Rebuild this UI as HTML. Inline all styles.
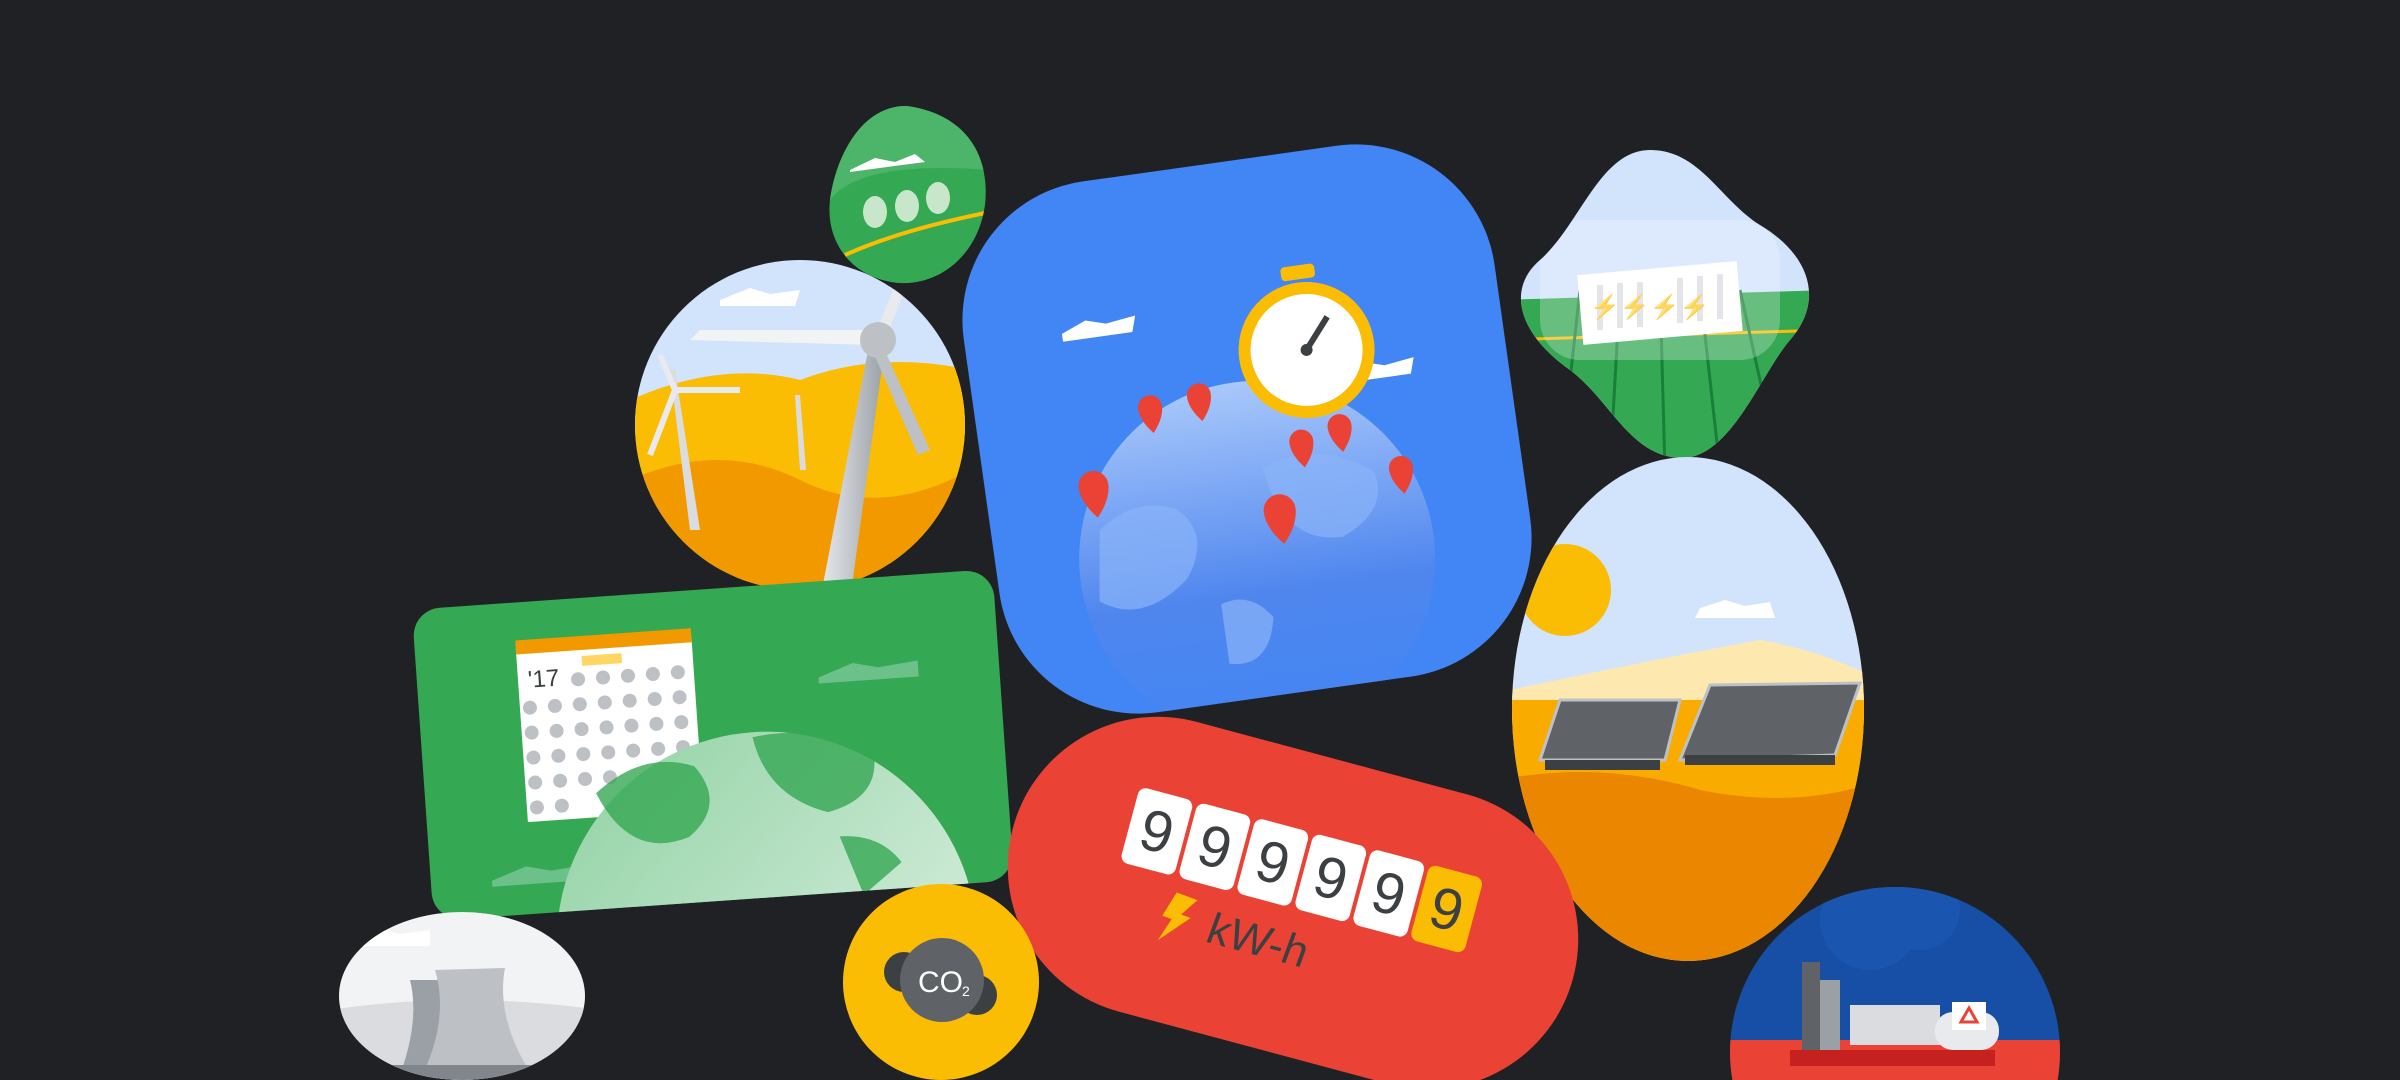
<!DOCTYPE html>
<html><head><meta charset="utf-8"><style>
html,body{margin:0;padding:0;background:#202124;width:2400px;height:1080px;overflow:hidden}
svg{display:block;position:absolute;left:0;top:0;overflow:hidden}
text{font-family:"Liberation Sans",sans-serif}
</style></head><body>
<svg width="2400" height="1080" viewBox="0 0 2400 1080" xmlns="http://www.w3.org/2000/svg">
<defs>
<clipPath id="cWind"><circle cx="800" cy="425" r="165"/></clipPath>
<clipPath id="cSmall"><path d="M907 106 C970 115 990 160 985 205 C978 255 940 285 900 283 C855 280 825 245 830 200 C835 160 860 105 907 106Z"/></clipPath>
<clipPath id="cBatt"><path d="M1650 150 C1700 150 1720 200 1760 225 C1810 255 1825 300 1790 340 C1760 375 1730 460 1680 458 C1630 456 1610 400 1570 370 C1520 335 1505 290 1540 260 C1580 225 1600 150 1650 150Z"/></clipPath>
<clipPath id="cSolar"><ellipse cx="1688" cy="709" rx="176" ry="252"/></clipPath>
<clipPath id="cTower"><ellipse cx="462" cy="996" rx="123" ry="84"/></clipPath>
<clipPath id="cFact"><circle cx="1895" cy="1052" r="165"/></clipPath>
<clipPath id="cBlue"><rect x="-268" y="-268" width="536" height="536" rx="140"/></clipPath>
<clipPath id="cGreen"><rect x="-291" y="-156" width="582" height="312" rx="28"/></clipPath>
<linearGradient id="gGlobe" x1="0" y1="0" x2="0" y2="1"><stop offset="0" stop-color="#a9c8fb"/><stop offset="0.6" stop-color="#4f86ee"/><stop offset="1" stop-color="#4285f4"/></linearGradient>
<linearGradient id="gGreenGlobe" x1="0" y1="0" x2="1" y2="1"><stop offset="0" stop-color="#8fd1a2"/><stop offset="1" stop-color="#e6f4ea"/></linearGradient>
<linearGradient id="gPole" x1="0" y1="0" x2="1" y2="0"><stop offset="0" stop-color="#e8eaed"/><stop offset="1" stop-color="#9aa0a6"/></linearGradient>
</defs>

<g clip-path="url(#cSmall)">
<rect x="820" y="100" width="180" height="190" fill="#34a853"/>
<path d="M830 200 Q860 160 990 170 L990 100 L820 100Z" fill="#4cb56a"/>
<path d="M850 170 l25 -12 l20 4 l20 -8 l10 8 -75 10z" fill="#fff"/>
<ellipse cx="875" cy="212" rx="12" ry="16" fill="#c8e6c9"/><ellipse cx="907" cy="206" rx="12" ry="16" fill="#c8e6c9"/><ellipse cx="938" cy="198" rx="12" ry="16" fill="#c8e6c9"/>
<path d="M845 255 Q900 230 990 212" stroke="#fbbc04" stroke-width="4" fill="none"/>
</g>

<g clip-path="url(#cWind)">
<rect x="630" y="255" width="340" height="340" fill="#d2e3fc"/>
<path d="M630 400 Q720 360 800 380 Q880 350 970 370 L970 600 L630 600Z" fill="#fbbc04"/>
<path d="M630 480 Q720 440 800 480 Q880 520 970 470 L970 600 L630 600Z" fill="#f29900"/>
<path d="M720 300 l30 -12 l20 6 l30 -4 l-5 16 -75 0z" fill="#fff"/>
<path d="M690 530 L670 370 L675 370 L700 530Z" fill="#dadce0"/>
<path d="M800 470 L795 395 L800 395 L806 470Z" fill="#dadce0"/>
<path d="M820 600 L870 340 L885 345 L850 600Z" fill="url(#gPole)"/>
<path d="M875 345 L690 340 L700 330 L875 330Z" fill="#f1f3f4"/>
<path d="M880 340 L930 450 L918 455 L870 345Z" fill="#bdc1c6"/>
<path d="M875 335 L905 260 L915 265 L885 340Z" fill="#e8eaed"/>
<circle cx="878" cy="340" r="18" fill="#bdc1c6"/>
<path d="M675 390 L650 455 M675 390 L740 390 M675 390 L660 355" stroke="#e8eaed" stroke-width="6"/>
</g>

<g clip-path="url(#cBatt)">
<rect x="1500" y="140" width="330" height="330" fill="#d2e3fc"/>
<path d="M1500 300 L1830 290 L1830 470 L1500 470Z" fill="#34a853"/>
<path d="M1500 340 L1830 330" stroke="#fbbc04" stroke-width="3"/>
<path d="M1580 290 L1560 470 M1620 290 L1610 470 M1660 290 L1665 470 M1700 290 L1720 470 M1740 290 L1780 470" stroke="#188038" stroke-width="3"/>
<rect x="1580" y="268" width="160" height="70" fill="#fff" transform="rotate(-5 1660 303)"/>
<path d="M1600 285 v45 M1620 283 v45 M1640 282 v45 M1680 278 v45 M1700 276 v45 M1720 274 v45" stroke="#dadce0" stroke-width="6"/>
<text x="1590" y="315" fill="#fbbc04" font-size="24">⚡⚡⚡⚡</text>
<rect x="1540" y="220" width="240" height="140" rx="40" fill="#fff" opacity="0.25"/>
</g>

<g clip-path="url(#cSolar)">
<rect x="1500" y="450" width="380" height="520" fill="#d2e3fc"/>
<circle cx="1565" cy="590" r="46" fill="#fbbc04"/>
<path d="M1700 608 l25 -8 l20 6 l25 -4 l5 16 -80 0z" fill="#fff"/>
<path d="M1510 690 Q1650 660 1760 640 Q1820 650 1880 680 L1880 720 L1510 720Z" fill="#fde9b0"/>
<rect x="1500" y="700" width="380" height="270" fill="#f9ab00"/>
<path d="M1500 780 Q1600 760 1700 790 Q1800 810 1880 780 L1880 970 L1500 970Z" fill="#ea8600"/>
<path d="M1540 760 L1560 700 L1680 700 L1665 760Z" fill="#5f6368" stroke="#bdc1c6" stroke-width="3"/>
<path d="M1680 760 L1710 685 L1860 683 L1835 755Z" fill="#5f6368" stroke="#bdc1c6" stroke-width="3"/>
<rect x="1545" y="760" width="115" height="10" fill="#3c4043"/>
<rect x="1685" y="755" width="150" height="10" fill="#3c4043"/>
</g>

<g transform="translate(1247,429) rotate(-8)">
<rect x="-268" y="-268" width="536" height="536" rx="140" fill="#4285f4"/>
<g clip-path="url(#cBlue)">
<circle cx="-8" cy="130" r="178" fill="url(#gGlobe)"/>
<path d="M-160 80 q40 -30 80 -10 q30 30 0 70 q-50 40 -90 10z M10 40 q60 -20 110 20 q10 40 -40 60 q-60 0 -70 -80z M-50 170 q30 -10 50 20 q-10 50 -50 40z" fill="#8ab4f8" opacity="0.7"/>
</g>
<path d="M-170 -120 l25 -10 l20 6 l30 -4 l-5 16 -70 0z" fill="#fff"/>
<path d="M100 -40 l25 -10 l20 6 l30 -4 l-5 16 -70 0z" fill="#fff"/>
<circle cx="70" cy="-70" r="68" fill="#fbbc04"/>
<circle cx="70" cy="-70" r="56" fill="#fff"/>
<rect x="55" y="-155" width="34" height="14" rx="4" fill="#fbbc04"/>
<path d="M70 -70 L95 -100" stroke="#3c4043" stroke-width="6"/>
<circle cx="70" cy="-70" r="6" fill="#3c4043"/>
<g fill="#ea4335" transform="translate(-5,-45)">
<path d="M-100 10 a12 12 0 1 1 24 0 q0 12 -12 26 q-12 -14 -12 -26z"/>
<path d="M-50 5 a12 12 0 1 1 24 0 q0 12 -12 26 q-12 -14 -12 -26z"/>
<path d="M-170 80 a15 15 0 1 1 30 0 q0 15 -15 32 q-15 -17 -15 -32z"/>
<path d="M45 65 a12 12 0 1 1 24 0 q0 12 -12 26 q-12 -14 -12 -26z"/>
<path d="M85 55 a12 12 0 1 1 24 0 q0 12 -12 26 q-12 -14 -12 -26z"/>
<path d="M140 105 a12 12 0 1 1 24 0 q0 12 -12 26 q-12 -14 -12 -26z"/>
<path d="M10 130 a16 16 0 1 1 32 0 q0 16 -16 34 q-16 -18 -16 -34z"/>
</g>
</g>

<g transform="translate(713,745) rotate(-4)">
<rect x="-291" y="-156" width="582" height="312" rx="28" fill="#34a853"/>
<g clip-path="url(#cGreen)">
<path d="M-230 120 l35 -12 l25 6 l40 -4 l0 16 -100 0z M110 -60 l35 -12 l25 6 l40 -4 l0 16 -100 0z" fill="#6cc08a"/>
<rect x="-190" y="-110" width="176" height="174" fill="#fff"/>
<rect x="-190" y="-118" width="176" height="14" fill="#f29900"/>
<rect x="-125" y="-98" width="40" height="10" fill="#fdd663"/>
<text x="-180" y="-70" font-size="24" fill="#3c4043">'17</text>
<g fill="#bdc1c6">
<circle cx="-130" cy="-75" r="7"/><circle cx="-105" cy="-75" r="7"/><circle cx="-80" cy="-75" r="7"/><circle cx="-55" cy="-75" r="7"/><circle cx="-30" cy="-75" r="7"/>
<circle cx="-180" cy="-50" r="7"/><circle cx="-155" cy="-50" r="7"/><circle cx="-130" cy="-50" r="7"/><circle cx="-105" cy="-50" r="7"/><circle cx="-80" cy="-50" r="7"/><circle cx="-55" cy="-50" r="7"/><circle cx="-30" cy="-50" r="7"/>
<circle cx="-180" cy="-25" r="7"/><circle cx="-155" cy="-25" r="7"/><circle cx="-130" cy="-25" r="7"/><circle cx="-105" cy="-25" r="7"/><circle cx="-80" cy="-25" r="7"/><circle cx="-55" cy="-25" r="7"/><circle cx="-30" cy="-25" r="7"/>
<circle cx="-180" cy="0" r="7"/><circle cx="-155" cy="0" r="7"/><circle cx="-130" cy="0" r="7"/><circle cx="-105" cy="0" r="7"/><circle cx="-80" cy="0" r="7"/><circle cx="-55" cy="0" r="7"/><circle cx="-30" cy="0" r="7"/>
<circle cx="-180" cy="25" r="7"/><circle cx="-155" cy="25" r="7"/><circle cx="-130" cy="25" r="7"/><circle cx="-105" cy="25" r="7"/>
<circle cx="-180" cy="50" r="7"/><circle cx="-155" cy="50" r="7"/>
</g>
<circle cx="40" cy="200" r="210" fill="url(#gGreenGlobe)"/>
<path d="M-120 40 q50 -40 100 -20 q30 40 -10 70 q-60 20 -90 -50z M40 -5 q70 -10 120 30 q0 40 -50 50 q-60 -20 -70 -80z M120 100 q40 0 60 30 l-40 30z" fill="#34a853" opacity="0.8"/>
</g>
</g>

<g transform="translate(1293,903) rotate(15)">
<rect x="-290" y="-150" width="580" height="300" rx="150" fill="#ea4335"/>
<g font-size="58" fill="#3c4043" text-anchor="middle">
<rect x="-178" y="-73" width="56" height="78" rx="8" fill="#fff"/><text x="-150" y="-14">9</text>
<rect x="-118" y="-73" width="56" height="78" rx="8" fill="#fff"/><text x="-90" y="-14">9</text>
<rect x="-58" y="-73" width="56" height="78" rx="8" fill="#fff"/><text x="-30" y="-14">9</text>
<rect x="2" y="-73" width="56" height="78" rx="8" fill="#fff"/><text x="30" y="-14">9</text>
<rect x="62" y="-73" width="56" height="78" rx="8" fill="#fff"/><text x="90" y="-14">9</text>
<rect x="122" y="-73" width="56" height="78" rx="8" fill="#fbbc04"/><text x="150" y="-14">9</text>
</g>
<path d="M-115 20 l22 2 -12 18 10 1 -26 30 8 -24 -10 -1z" fill="#fbbc04"/>
<text x="-20" y="60" font-size="44" fill="#3c4043" text-anchor="middle" transform="skewX(-5)">kW-h</text>
</g>

<circle cx="941" cy="982" r="98" fill="#fbbc04"/>
<circle cx="904" cy="972" r="20" fill="#3c4043"/><circle cx="977" cy="995" r="20" fill="#3c4043"/>
<circle cx="942" cy="980" r="42" fill="#5f6368"/>
<text x="918" y="992" font-size="30" fill="#fff">CO</text><text x="962" y="996" font-size="14" fill="#fff">2</text>

<g clip-path="url(#cTower)">
<rect x="330" y="900" width="270" height="190" fill="#f1f3f4"/>
<path d="M340 940 l35 -12 l25 6 l30 -4 l0 16 -90 0z" fill="#fff"/>
<path d="M330 1010 Q460 990 600 1010 L600 1090 L330 1090Z" fill="#dadce0"/>
<path d="M400 1075 Q420 1020 410 980 L450 980 Q445 1030 470 1075Z" fill="#9aa0a6"/>
<path d="M420 1080 Q450 1020 435 970 L505 968 Q495 1020 535 1080Z" fill="#bdc1c6"/>
<rect x="380" y="1065" width="170" height="20" fill="#80868b"/>
</g>

<g clip-path="url(#cFact)">
<rect x="1720" y="880" width="360" height="200" fill="#174ea6"/>
<circle cx="1870" cy="920" r="50" fill="#1a56b0"/><circle cx="1920" cy="910" r="40" fill="#1a56b0"/>
<rect x="1720" y="1040" width="360" height="40" fill="#ea4335"/>
<rect x="1802" y="962" width="18" height="88" fill="#5f6368"/>
<rect x="1820" y="980" width="20" height="70" fill="#9aa0a6"/>
<rect x="1850" y="1005" width="90" height="40" fill="#dadce0"/>
<rect x="1935" y="1012" width="64" height="38" rx="18" fill="#e8eaed"/>
<rect x="1952" y="1002" width="34" height="28" fill="#fff"/>
<path d="M1969 1008 l8 14 h-16z" fill="none" stroke="#ea4335" stroke-width="3"/>
<rect x="1790" y="1050" width="205" height="16" fill="#c5221f"/>
</g>
</svg>
</body></html>
